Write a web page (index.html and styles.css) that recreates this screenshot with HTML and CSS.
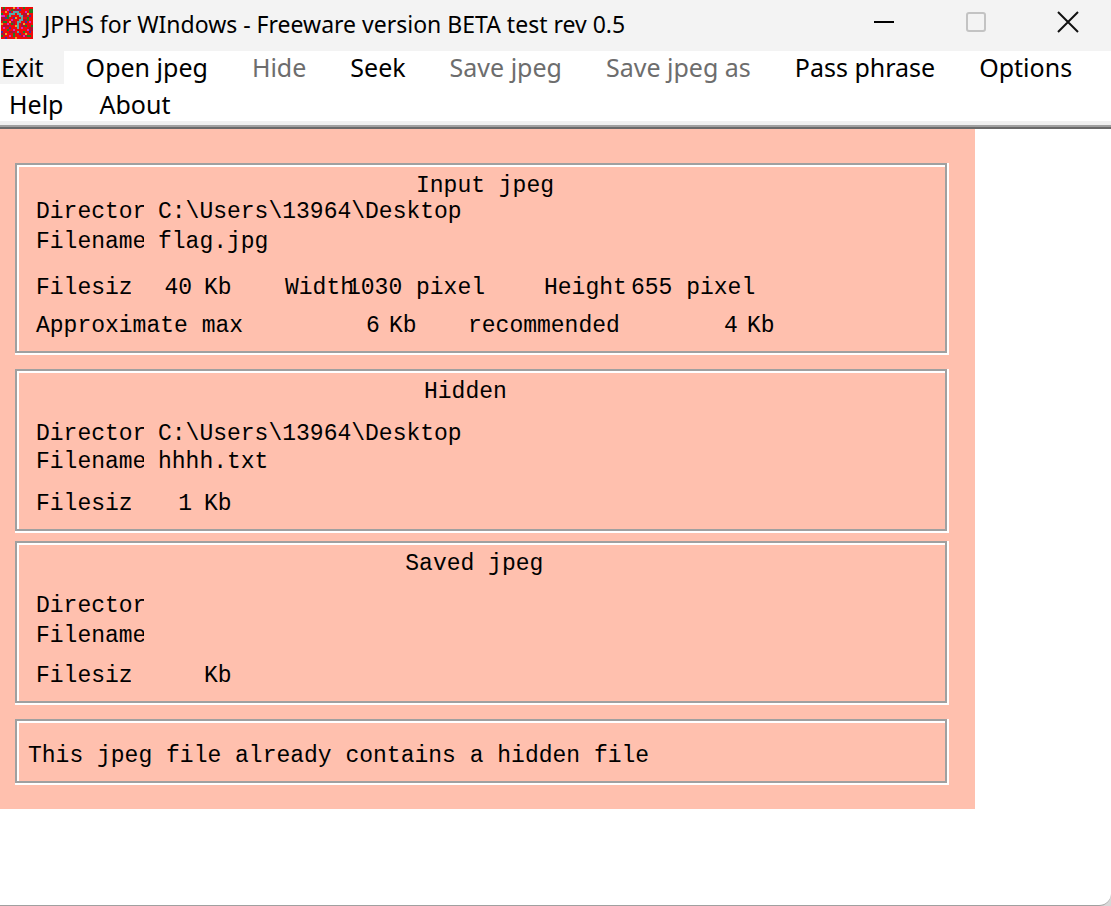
FILE: index.html
```html
<!DOCTYPE html>
<html lang="en">
<head>
<meta charset="utf-8">
<title>JPHS for WIndows</title>
<link rel="stylesheet" href="styles.css">
</head>
<body>
<div class="window">
  <header class="titlebar">
    <svg class="app-icon" viewBox="0 0 16 16" shape-rendering="crispEdges" aria-hidden="true">
      <rect width="16" height="16" fill="#f00808"/>
      <path fill="#b01030" d="M0 1h2v1h-2zM6 1h3v1h-3zM11 3h2v2h-2zM0 5h2v2h-2zM5 7h2v2h-2zM11 6h2v1h-2zM1 9h3v1h-3zM10 8h2v2h-2zM4 12h3v1h-3zM10 14h3v1h-3zM14 10h2v2h-2zM0 13h2v1h-2z"/>
      <path fill="#208020" d="M1 0h1v1h-1zM5 1h1v1h-1zM11 0h1v1h-1zM14 1h2v2h-2zM0 3h1v1h-1zM3 4h1v2h-1zM13 5h1v2h-1zM1 7h2v1h-2zM5 8h1v1h-1zM12 9h1v1h-1zM15 9h1v1h-1zM3 11h1v1h-1zM6 13h1v2h-1zM11 12h1v1h-1zM13 14h2v1h-2zM0 14h1v1h-1z"/>
      <path fill="#d828c0" d="M3 1h1v1h-1zM8 0h1v1h-1zM12 2h1v1h-1zM0 4h2v1h-2zM5 6h1v1h-1zM14 7h1v1h-1zM3 8h1v1h-1zM1 10h1v1h-1zM6 11h1v1h-1zM10 10h1v1h-1zM13 11h1v1h-1zM4 14h1v1h-1zM11 14h1v1h-1z"/>
      <path fill="#4030a0" d="M4 2h1v1h-1zM9 1h1v1h-1zM14 4h1v1h-1zM2 5h1v1h-1zM6 5h1v1h-1zM12 7h1v1h-1zM4 10h1v1h-1zM0 12h1v1h-1zM9 13h1v1h-1zM14 12h1v1h-1zM2 15h1v1h-1z"/>
      <path fill="#e8a828" d="M6 0h1v1h-1zM13 3h1v1h-1zM2 2h1v1h-1zM7 5h1v1h-1zM4 7h1v1h-1zM0 8h1v1h-1zM7 9h1v1h-1zM11 8h1v1h-1zM2 13h1v1h-1zM12 13h1v1h-1zM7 15h1v1h-1z"/>
      <path fill="#58a8a8" d="M6 2h3v1h-3zM4 3h3v1h-3zM8 3h2v1h-2zM4 4h1v1h-1zM9 4h2v1h-2zM10 5h1v1h-1zM9 6h2v1h-2zM8 7h2v1h-2zM8 8h1v3h-1zM8 12h1v1h-1z"/>
    </svg>
    <h1 class="title">JPHS for WIndows - Freeware version BETA test rev 0.5</h1>
    <div class="controls">
      <button class="control" type="button" aria-label="Minimize">
        <svg viewBox="0 0 20 20" aria-hidden="true"><path d="M0 9h20" stroke="#000" stroke-width="2"/></svg>
      </button>
      <button class="control" type="button" aria-label="Maximize" disabled>
        <svg viewBox="0 0 20 20" aria-hidden="true"><rect x="1" y="0" width="18" height="18" rx="2" fill="none" stroke="#c3c3c3" stroke-width="2"/></svg>
      </button>
      <button class="control" type="button" aria-label="Close">
        <svg viewBox="0 0 20 20" aria-hidden="true"><path d="M0 -1l20 20M20 -1L0 19" stroke="#111" stroke-width="2"/></svg>
      </button>
    </div>
  </header>

  <nav class="menubar" aria-label="Menu">
    <div class="menu-row">
      <button class="menu active" type="button">Exit</button>
      <button class="menu" type="button">Open jpeg</button>
      <button class="menu" type="button" disabled>Hide</button>
      <button class="menu" type="button">Seek</button>
      <button class="menu" type="button" disabled>Save jpeg</button>
      <button class="menu" type="button" disabled>Save jpeg as</button>
      <button class="menu" type="button">Pass phrase</button>
      <button class="menu" type="button">Options</button>
    </div>
    <div class="menu-row second">
      <button class="menu" type="button">Help</button>
      <button class="menu" type="button">About</button>
    </div>
  </nav>

  <div class="client">
    <main class="form">
      <section class="frame input">
        <h2 class="caption">Input jpeg</h2>
        <div class="row"><span class="label">Directory</span><span>C:\Users\13964\Desktop</span></div>
        <div class="row name"><span class="label">Filename</span><span>flag.jpg</span></div>
        <div class="row size">
          <span class="label short">Filesize</span><span class="number">40</span><span class="unit">Kb</span>
          <span class="width-label">Width</span><span class="pixels">1030 pixel</span>
          <span class="height-label">Height</span><span>655 pixel</span>
        </div>
        <div class="row limits">
          <span class="max-label">Approximate max</span><span class="limit">6</span><span class="limit-unit">Kb</span>
          <span class="rec-label">recommended</span><span class="limit">4</span><span>Kb</span>
        </div>
      </section>

      <section class="frame hidden-file">
        <h2 class="caption">Hidden</h2>
        <div class="row"><span class="label">Directory</span><span>C:\Users\13964\Desktop</span></div>
        <div class="row name"><span class="label">Filename</span><span>hhhh.txt</span></div>
        <div class="row size"><span class="label short">Filesize</span><span class="number">1</span><span class="unit">Kb</span></div>
      </section>

      <section class="frame saved">
        <h2 class="caption">Saved jpeg</h2>
        <div class="row"><span class="label">Directory</span></div>
        <div class="row name"><span class="label">Filename</span></div>
        <div class="row size"><span class="label short">Filesize</span><span class="number"></span><span class="unit">Kb</span></div>
      </section>

      <section class="frame status">
        <p class="message" role="status">This jpeg file already contains a hidden file</p>
      </section>
    </main>
  </div>
</div>
</body>
</html>
```

FILE: styles.css
```css
* { box-sizing: border-box; }

body {
  margin: 0;
  background: #d8d8d8;
  color: #000;
}

.window {
  min-height: 100vh;
  overflow: hidden;
  background: #fff;
  border-bottom: 1px solid #a0a0a0;
  border-radius: 0 0 12px 0;
}

.titlebar {
  display: flex;
  align-items: center;
  height: 51px;
  padding: 0 13px 6px 1px;
  background: #f3f3f3;
}

.app-icon { width: 32px; height: 32px; flex: none; }

.title {
  margin: 0 0 0 11px;
  padding-top: 2px;
  font: 400 23px/32px "Noto Sans", "Open Sans", sans-serif;
  white-space: nowrap;
}

.controls {
  display: flex;
  gap: 32px;
  margin-left: auto;
}

.control {
  display: flex;
  justify-content: center;
  width: 60px;
  padding: 6px 0;
  border: 0;
  background: none;
}

.control svg { width: 20px; height: 20px; overflow: visible; }

.menubar {
  display: flex;
  flex-direction: column;
  gap: 4px;
  border-bottom: 4px solid #f0f0f0;
}

.menu-row { display: flex; height: 33px; }
.menu-row.second { padding-left: 9px; gap: 36px; }

.menu {
  flex: none;
  padding: 0 22px 2px;
  border: 0;
  background: none;
  color: #000;
  font: 400 25px/30px "Noto Sans", "Open Sans", sans-serif;
  white-space: nowrap;
}

.menu:disabled { color: #6d6d6d; }
.menu.active { padding-left: 1px; padding-right: 20px; background: #f3f3f3; }
.second .menu { padding: 0 0 2px; }

.client {
  border-top: 2px solid #a0a0a0;
  box-shadow: inset 0 2px #696969;
  padding-top: 2px;
}

.form {
  display: flex;
  flex-direction: column;
  gap: 16px;
  max-width: 975px;
  padding: 34px 28px 26px 15px;
  background: #ffc0ae;
  font: 400 23px/26px "Liberation Mono", monospace;
}

.frame {
  padding: 8px 17px 12px 19px;
  border: 2px solid #a0a0a0;
  box-shadow: inset 2px 2px #fff, 2px 0 #fff, 0 2px #fff, 2px 2px #fff;
}

.caption { margin: 0 0 16px; font: inherit; }
.input .caption { margin-bottom: 0; padding-left: 42.6%; }
.hidden-file .caption { padding-left: 43.5%; }
.saved .caption { padding-left: 41.4%; }

.row { display: flex; white-space: nowrap; }
.name { margin-top: 4px; }
.size { margin-top: 16px; }
.input .size { margin-top: 20px; }
.hidden-file .name { margin-top: 2px; }
.saved .size { margin-top: 14px; }
.limits { margin-top: 12px; }

.label { width: 108px; margin-right: 14px; overflow: hidden; }
.label.short { width: 95px; margin-right: 0; }
.number { width: 61px; text-align: right; }
.unit { width: 93px; padding-left: 12px; }
.width-label { width: 62px; }
.pixels { width: 197px; }
.height-label { width: 87px; }

.max-label { width: 330px; }
.limit { width: 23px; }
.limit-unit { width: 79px; }
.rec-label { width: 256px; }

.saved { margin-top: -6px; }

.message { margin: 14px 0 0 -8px; }
```
